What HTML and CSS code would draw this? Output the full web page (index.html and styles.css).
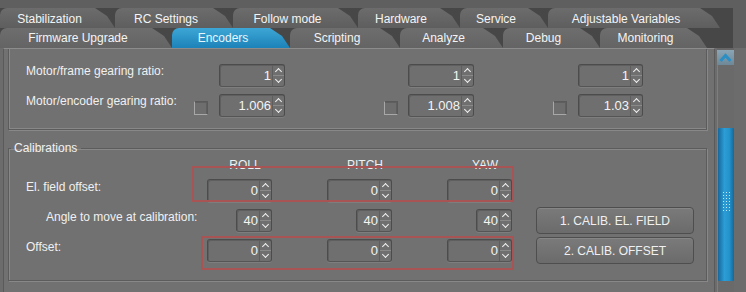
FILE: index.html
```html
<!DOCTYPE html>
<html>
<head>
<meta charset="utf-8">
<link rel="stylesheet" href="styles.css">
</head>
<body>
<div class="tabbar">
  <div class="tabrow row1">
    <div class="tab t1">Stabilization</div>
    <div class="tab t2">RC Settings</div>
    <div class="tab t3">Follow mode</div>
    <div class="tab t4">Hardware</div>
    <div class="tab t5">Service</div>
    <div class="tab t6">Adjustable Variables</div>
  </div>
  <div class="tabrow row2">
    <div class="tab u1">Firmware Upgrade</div>
    <div class="tab u2 active">Encoders</div>
    <div class="tab u3">Scripting</div>
    <div class="tab u4">Analyze</div>
    <div class="tab u5">Debug</div>
    <div class="tab u6">Monitoring</div>
  </div>
</div>
<div class="main">
  <div class="viewport">
    <div class="group1">
      <div class="ratio-grid">
        <div class="lbl r1">Motor/frame gearing ratio:</div>
        <div class="spin r1 c-s1"><span class="val">1</span><span class="arrows"><i class="up"></i><i class="dn"></i></span></div>
        <div class="spin r1 c-s2"><span class="val">1</span><span class="arrows"><i class="up"></i><i class="dn"></i></span></div>
        <div class="spin r1 c-s3"><span class="val">1</span><span class="arrows"><i class="up"></i><i class="dn"></i></span></div>

        <div class="lbl r2">Motor/encoder gearing ratio:</div>
        <div class="check r2 c-c1"></div>
        <div class="spin r2 c-s1"><span class="val">1.006</span><span class="arrows"><i class="up"></i><i class="dn"></i></span></div>
        <div class="check r2 c-c2"></div>
        <div class="spin r2 c-s2"><span class="val">1.008</span><span class="arrows"><i class="up"></i><i class="dn"></i></span></div>
        <div class="check r2 c-c3"></div>
        <div class="spin r2 c-s3"><span class="val">1.03</span><span class="arrows"><i class="up"></i><i class="dn"></i></span></div>
      </div>
    </div>
    <fieldset class="group2">
      <legend>Calibrations</legend>
      <div class="cal">
        <div class="hdr r1 c-a">ROLL</div>
        <div class="hdr r1 c-b">PITCH</div>
        <div class="hdr r1 c-c">YAW</div>

        <div class="lbl r2">El. field offset:</div>
        <div class="spin r2 c-a"><span class="val">0</span><span class="arrows"><i class="up"></i><i class="dn"></i></span></div>
        <div class="spin r2 c-b"><span class="val">0</span><span class="arrows"><i class="up"></i><i class="dn"></i></span></div>
        <div class="spin r2 c-c"><span class="val">0</span><span class="arrows"><i class="up"></i><i class="dn"></i></span></div>

        <div class="lbl r3 indent">Angle to move at calibration:</div>
        <div class="spin small r3 c-a"><span class="val">40</span><span class="arrows"><i class="up"></i><i class="dn"></i></span></div>
        <div class="spin small r3 c-b"><span class="val">40</span><span class="arrows"><i class="up"></i><i class="dn"></i></span></div>
        <div class="spin small r3 c-c"><span class="val">40</span><span class="arrows"><i class="up"></i><i class="dn"></i></span></div>
        <button class="btn r3 c-d">1. CALIB. EL. FIELD</button>

        <div class="lbl r4">Offset:</div>
        <div class="spin r4 c-a"><span class="val">0</span><span class="arrows"><i class="up"></i><i class="dn"></i></span></div>
        <div class="spin r4 c-b"><span class="val">0</span><span class="arrows"><i class="up"></i><i class="dn"></i></span></div>
        <div class="spin r4 c-c"><span class="val">0</span><span class="arrows"><i class="up"></i><i class="dn"></i></span></div>
        <button class="btn r4 c-d">2. CALIB. OFFSET</button>

        <div class="mark mark1"></div>
        <div class="mark mark2"></div>
      </div>
    </fieldset>
  </div>
  <div class="scrollbar">
    <div class="sb-up">
      <svg width="15" height="14" viewBox="0 0 15 14"><path d="M2.5 10 L7.5 4.5 L12.5 10" fill="none" stroke="#2b8fc4" stroke-width="3"/></svg>
    </div>
    <div class="sb-track">
      <div class="sb-thumb"><div class="grip"></div></div>
    </div>
  </div>
</div>
</body>
</html>
```
FILE: styles.css
```css
html, body {
  margin: 0;
  padding: 0;
}
body {
  width: 746px;
  height: 292px;
  overflow: hidden;
  background: #5f5f5f;
  font: 12px "Liberation Sans", Arial, sans-serif;
  color: #efefef;
}

/* ---------- tabs ---------- */
.tabbar {
  padding-top: 8px;
  width: 733px;
}
.tabrow {
  display: flex;
  height: 20px;
  background: #474747;
}
.tab {
  flex: none;
  height: 100%;
  box-sizing: border-box;
  display: flex;
  align-items: center;
  justify-content: center;
  padding-right: 16px;
  padding-top: 1px;
  clip-path: polygon(0 0, calc(100% - 20px) 0, calc(100% - 8px) 40%, 100% 100%, 0 100%);
  border-top-left-radius: 7px;
  color: #f4f4f4;
  white-space: nowrap;
}
.row1 .tab { background: linear-gradient(#6c6c6c, #5e5e5e); }
.t1 { width: 115px; }
.t2 { width: 118px; }
.t3 { width: 125px; }
.t4 { width: 102px; }
.t5 { width: 88px; }
.t6 { width: 172px; }
.u1 { width: 172px; }
.u2 { width: 118px; }
.u3 { width: 110px; }
.u4 { width: 103px; }
.u5 { width: 97px; }
.u6 { width: 107px; }
.row2 .tab { background: linear-gradient(#6e6e6e, #646464); padding-top: 0; }
.row2 .tab.active {
  background: linear-gradient(#3ea6d6, #1c82b8);
  color: #e8f6ff;
}

/* ---------- main ---------- */
.main {
  display: flex;
  height: 244px;
  background: #6c6c6c;
}
.viewport {
  width: 712px;
  margin-left: 3px;
  box-sizing: border-box;
  border-top: 1px solid #8c8c8c;
  border-left: 1px solid #5a5a5a;
  border-right: 1px solid #5a5a5a;
  background: #717171;
  overflow: hidden;
}
.group1 {
  margin-left: 4px;
  width: 699px;
  height: 81px;
  box-sizing: border-box;
  border: 1px solid #5c5c5c;
  border-top: none;
  box-shadow: inset 1px -1px 0 #888, 1px 1px 0 #888;
  padding-top: 15px;
}
.ratio-grid {
  display: grid;
  grid-template-columns: 168px 14px 11px 66px 99px 14px 10px 66px 79px 14px 11px 65px;
  grid-template-rows: 23px 23px;
  row-gap: 7px;
  padding-left: 17px;
}
.r1 { grid-row: 1; }
.r2 { grid-row: 2; }
.r3 { grid-row: 3; }
.r4 { grid-row: 4; }
.ratio-grid .lbl { grid-column: 1; }
.c-s1 { grid-column: 4; }
.c-s2 { grid-column: 8; }
.c-s3 { grid-column: 12; }
.c-c1 { grid-column: 2; }
.c-c2 { grid-column: 6; }
.c-c3 { grid-column: 10; }

.lbl {
  padding-top: 0;
  white-space: nowrap;
  color: #f0f0f0;
}

/* spin box */
.spin {
  display: flex;
  height: 23px;
  box-sizing: border-box;
  border: 1px solid #4c4c4c;
  border-bottom-color: #555;
  border-radius: 3px;
  background: #6f6f6f;
  box-shadow: inset 1px 1px 0 #5f5f5f, 0 1px 0 #7e7e7e;
}
.spin .val {
  flex: 1;
  text-align: right;
  padding-right: 1px;
  line-height: 21px;
  font-size: 13px;
  color: #f4f4f4;
}
.spin .arrows {
  width: 11px;
  display: flex;
  flex-direction: column;
  border-left: 1px solid #5e5e5e;
}
.spin .arrows i {
  flex: 1;
  position: relative;
}
.spin .arrows i.up { border-bottom: 1px solid #8a8a8a; }
.spin .arrows i::after {
  content: "";
  position: absolute;
  left: 3px;
  width: 4px;
  height: 4px;
  border-left: 1.5px solid #f2f2f2;
  border-top: 1.5px solid #f2f2f2;
}
.spin .arrows i.up::after { top: 4px; transform: rotate(45deg); }
.spin .arrows i.dn::after { top: 1px; transform: rotate(-135deg); }

.check {
  width: 14px;
  height: 14px;
  box-sizing: border-box;
  margin-top: 7px;
  border: 1px solid #a8a8a8;
  border-top-color: #5a5a5a;
  border-right-color: #5a5a5a;
  background: #6e6e6e;
  box-shadow: inset -1px 1px 0 #5f5f5f;
}

/* ---------- calibrations ---------- */
.group2 {
  margin: 11px 0 0 4px;
  width: 699px;
  height: 140px;
  box-sizing: border-box;
  padding: 0;
  border: 1px solid #5c5c5c;
  box-shadow: inset 1px 1px 0 #888, 1px 1px 0 #888;
}
.group2 legend {
  margin-left: 2px;
  padding: 0 4px 0 3px;
  line-height: 14px;
  color: #f2f2f2;
}
.cal {
  position: relative;
  display: grid;
  grid-template-columns: 181px 65px 55px 65px 55px 65px 24px 158px;
  grid-template-rows: 14px 23px 23px 23px;
  row-gap: 7px;
  padding: 3px 0 0 17px;
}
.c-a { grid-column: 2; }
.c-b { grid-column: 4; }
.c-c { grid-column: 6; }
.c-d { grid-column: 8; }
.cal .lbl { grid-column: 1; padding-top: 1px; }
.cal .lbl.indent { padding-left: 20px; }
.hdr {
  text-align: center;
  padding-left: 11px;
  color: #f0f0f0;
}
.spin.small {
  width: 36px;
  justify-self: end;
}
.btn {
  margin: -2px 0 0 0;
  height: 27px;
  padding: 0;
  font: 12px "Liberation Sans", Arial, sans-serif;
  color: #f0f0f0;
  border: 1px solid #4e4e4e;
  border-radius: 4px;
  background: linear-gradient(#7a7a7a, #6b6b6b);
  box-shadow: inset 0 1px 0 #868686;
}
.mark {
  position: absolute;
  border: 2px solid #a85454;
  box-sizing: border-box;
  pointer-events: none;
}
.mark1 { left: 183px; top: 11px; width: 322px; height: 36px; }
.mark2 { left: 192px; top: 81px; width: 313px; height: 34px; }

/* ---------- scrollbar ---------- */
.scrollbar {
  width: 17px;
  margin-left: 2px;
  display: flex;
  flex-direction: column;
  background: #666;
}
.sb-up {
  height: 15px;
  margin-top: 2px;
  display: flex;
  align-items: center;
  justify-content: center;
  background: linear-gradient(#8aa5b5, #6e8898);
}
.sb-track {
  flex: 1;
  position: relative;
  background: #6a6a6a;
  border-left: 1px solid #7e7e7e;
}
.sb-thumb {
  position: absolute;
  left: 0;
  right: 0;
  top: 63px;
  height: 153px;
  background: linear-gradient(90deg, #17679a, #2c9dd6 40%, #2593cc 70%, #15689a);
  border-radius: 1px;
}
.grip {
  position: absolute;
  left: 4px;
  top: 63px;
  width: 8px;
  height: 22px;
  background-image: radial-gradient(circle, #bfe6ff 0.8px, transparent 1px);
  background-size: 3px 3px;
}
```
